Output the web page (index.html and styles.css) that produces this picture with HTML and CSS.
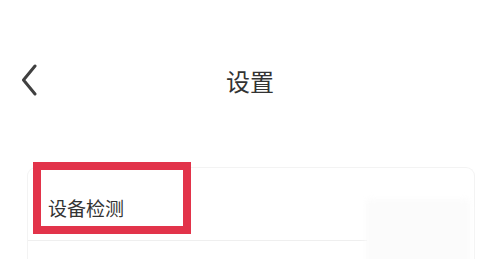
FILE: index.html
```html
<!DOCTYPE html>
<html>
<head>
    <title>设置</title>
    <meta name="viewport" content="width=device-width, initial-scale=1.0">
    <link rel="stylesheet" href="styles.css">
</head>
<body>
    <div class="top-bar">
        <div class="back-btn">
            <svg width="18" height="32" viewBox="0 0 18 32">
                <path d="M15 2 L3.5 16 L15 30" fill="none" stroke="#404040" stroke-width="3" stroke-linecap="round" stroke-linejoin="round"/>
            </svg>
        </div>
        <div class="page-title">设置</div>
        <div class="spacer"></div>
    </div>

    <div class="card">
        <div class="card-row">
            <span class="row-label">设备检测</span>
        </div>
        <div class="smudge"></div>
        <div class="highlight-box"></div>
    </div>
</body>
</html>
```

FILE: styles.css
```css
body {margin: 0; background-color: #fff; font-family: "Noto Sans CJK SC", "Noto Sans", sans-serif; color: #333; overflow: hidden;}
.top-bar {display: grid; grid-template-columns: 60px 1fr 60px; align-items: center; height: 50px; margin-top: 55px;}
.back-btn {padding-left: 20px; display: flex; align-items: center;}
.page-title {text-align: center; font-size: 24px; color: #333;}
.card {position: relative; margin: 62px 25px 0 27px; border: 1px solid #f3f3f3; border-bottom: none; border-radius: 9px 9px 0 0; height: 100px;}
.card-row {height: 72px; display: flex; align-items: center; padding-left: 20px; margin-right: 107px; border-bottom: 1px solid #efefef;}
.row-label {font-size: 19px; color: #333; margin-top: 6px;}
.smudge {position: absolute; right: 4px; top: 31px; width: 104px; height: 70px; background-color: #fbfbfb; border-radius: 4px; filter: blur(3px);}
.highlight-box {position: absolute; left: 5px; top: -6px; width: 158px; height: 72px; box-sizing: border-box; border: 8px solid #e2334a;}
```
